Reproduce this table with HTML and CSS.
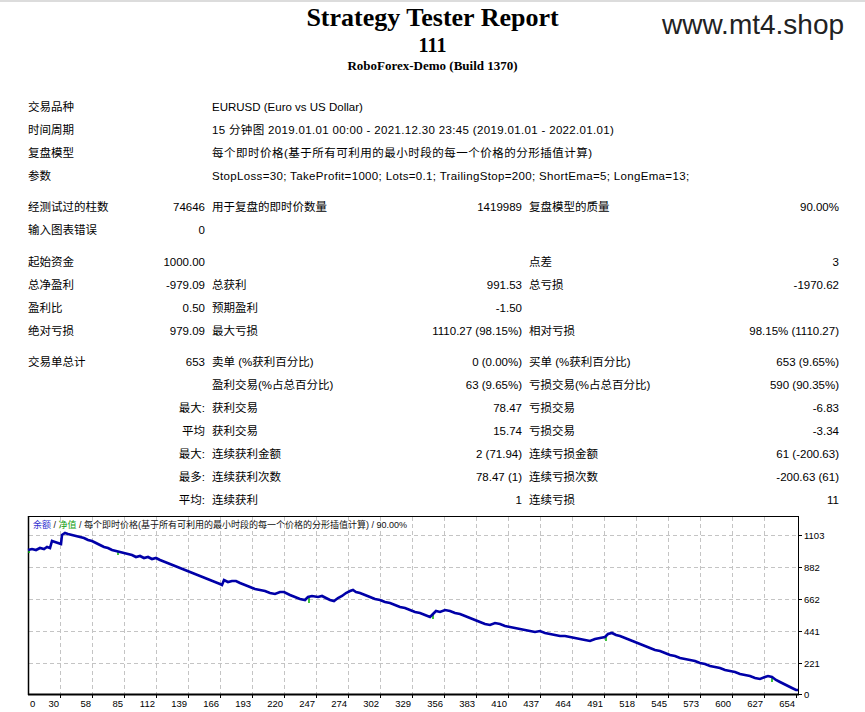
FILE: index.html
```html
<!DOCTYPE html>
<html lang="zh">
<head>
<meta charset="utf-8">
<title>Strategy Tester: 111</title>
<link rel="stylesheet" href="styles.css">
</head>
<body>
<header class="head">
  <div class="title">Strategy Tester Report</div>
  <div class="name">111</div>
  <div class="server">RoboForex-Demo (Build 1370)</div>
  <div class="watermark">www.mt4.shop</div>
</header>

<section class="stats">
  <div class="w2">交易品种</div><div class="w4">EURUSD (Euro vs US Dollar)</div>
  <div class="w2">时间周期</div><div class="w4 spaced">15 分钟图 2019.01.01 00:00 - 2021.12.30 23:45 (2019.01.01 - 2022.01.01)</div>
  <div class="w2">复盘模型</div><div class="w4 cjk">每个即时价格(基于所有可利用的最小时段的每一个价格的分形插值计算)</div>
  <div class="w2">参数</div><div class="w4 spaced">StopLoss=30; TakeProfit=1000; Lots=0.1; TrailingStop=200; ShortEma=5; LongEma=13;</div>
  <div class="gap"></div>

  <div>经测试过的柱数</div><div class="r">74646</div><div>用于复盘的即时价数量</div><div class="r">1419989</div><div>复盘模型的质量</div><div class="r">90.00%</div>
  <div>输入图表错误</div><div class="r">0</div><div class="w4"></div>
  <div class="gap g9"></div>

  <div>起始资金</div><div class="r">1000.00</div><div></div><div></div><div>点差</div><div class="r">3</div>
  <div>总净盈利</div><div class="r">-979.09</div><div>总获利</div><div class="r">991.53</div><div>总亏损</div><div class="r">-1970.62</div>
  <div>盈利比</div><div class="r">0.50</div><div>预期盈利</div><div class="r">-1.50</div><div></div><div></div>
  <div>绝对亏损</div><div class="r">979.09</div><div>最大亏损</div><div class="r">1110.27 (98.15%)</div><div>相对亏损</div><div class="r">98.15% (1110.27)</div>
  <div class="gap"></div>

  <div>交易单总计</div><div class="r">653</div><div>卖单 (%获利百分比)</div><div class="r">0 (0.00%)</div><div>买单 (%获利百分比)</div><div class="r">653 (9.65%)</div>
  <div></div><div></div><div>盈利交易(%占总百分比)</div><div class="r">63 (9.65%)</div><div>亏损交易(%占总百分比)</div><div class="r">590 (90.35%)</div>
  <div></div><div class="r">最大:</div><div>获利交易</div><div class="r">78.47</div><div>亏损交易</div><div class="r">-6.83</div>
  <div></div><div class="r">平均</div><div>获利交易</div><div class="r">15.74</div><div>亏损交易</div><div class="r">-3.34</div>
  <div></div><div class="r">最大:</div><div>连续获利金额</div><div class="r">2 (71.94)</div><div>连续亏损金额</div><div class="r">61 (-200.63)</div>
  <div></div><div class="r">最多:</div><div>连续获利次数</div><div class="r">78.47 (1)</div><div>连续亏损次数</div><div class="r">-200.63 (61)</div>
  <div></div><div class="r">平均:</div><div>连续获利</div><div class="r">1</div><div>连续亏损</div><div class="r">11</div>
</section>

<svg class="chart" width="865" height="200" viewBox="0 0 865 200" xmlns="http://www.w3.org/2000/svg">
  <g transform="translate(0,-512)">
    <g class="grid" stroke="#c4c4c4" stroke-width="1" stroke-dasharray="4 3" fill="none">
      <path d="M60.5 517V694M92.5 517V694M124.5 517V694M156.5 517V694M188.5 517V694M220.5 517V694M252.5 517V694M284.5 517V694M316.5 517V694M348.5 517V694M380.5 517V694M412.5 517V694M444.5 517V694M476.5 517V694M508.5 517V694M540.5 517V694M572.5 517V694M604.5 517V694M636.5 517V694M668.5 517V694M700.5 517V694M732.5 517V694M764.5 517V694"/>
      <path d="M29 535.5H799M29 567.5H799M29 599.5H799M29 631.5H799M29 663.5H799"/>
    </g>
    <rect x="28.5" y="516.5" width="770" height="178" fill="none" stroke="#000" stroke-width="1"/>
    <path d="M28 694.5H799" stroke="#000" stroke-width="2"/>
    <path d="M28.5 516V695" stroke="#000" stroke-width="1.5"/>
    <g stroke="#000" stroke-width="1">
      <path d="M60.5 695V698M92.5 695V698M124.5 695V698M156.5 695V698M188.5 695V698M220.5 695V698M252.5 695V698M284.5 695V698M316.5 695V698M348.5 695V698M380.5 695V698M412.5 695V698M444.5 695V698M476.5 695V698M508.5 695V698M540.5 695V698M572.5 695V698M604.5 695V698M636.5 695V698M668.5 695V698M700.5 695V698M732.5 695V698M764.5 695V698M796.5 695V698"/>
      <path d="M799 535.5H802M799 567.5H802M799 599.5H802M799 631.5H802M799 663.5H802M799 694.5H802"/>
    </g>

    <g stroke="#00b000" stroke-width="1.5">
      <path d="M29 549V553M118 551V555M309 597V603M433 615V619M606 637V641M772 678V682"/>
    </g>
    <polyline fill="none" stroke="#0000a8" stroke-width="2.6" stroke-linejoin="miter"
      points="28,550 32,549 36,550 40,548 44,549 47,547 50,548 52,541 55,542 58,543 61,544 62,535 65,533 68,534 72,535 76,536 80,537 84,538 88,540 92,541 96,543 100,545 104,547 108,548 112,550 116,551 120,552 124,553 128,554 132,555 136,557 140,556 144,558 148,557 152,559 156,558 160,560 165,562 170,564 175,566 180,568 185,570 190,572 195,574 200,576 205,578 210,580 215,582 220,584 222,585 224,580 228,582 232,581 236,581 240,583 245,585 250,587 255,589 260,590 265,591 270,593 275,594 280,592 284,592 290,595 295,597 300,599 305,600 308,597 312,596 318,597 322,596 326,598 330,600 334,601 338,598 342,596 346,593 350,591 353,590 356,592 360,593 365,595 370,597 375,599 380,600 385,602 390,603 395,605 400,607 405,608 410,610 415,612 420,613 425,615 430,617 433,614 436,611 440,612 445,610 450,611 455,613 460,614 465,616 470,618 475,620 480,622 485,624 490,625 495,623 500,624 505,626 510,627 515,628 520,629 525,630 530,631 535,632 540,631 545,633 550,634 555,635 560,636 565,636 570,637 575,638 580,639 585,640 590,641 595,639 600,638 605,637 608,634 612,633 616,635 620,636 625,638 630,640 635,642 640,644 645,646 650,648 655,650 660,651 665,653 670,655 675,656 680,658 685,659 690,660 695,661 700,663 705,664 710,666 715,667 720,668 725,670 730,671 735,672 740,674 745,675 750,676 755,678 760,679 765,677 768,676 772,677 776,680 780,682 784,684 788,686 792,688 796,690 798,690"/>

    <text class="legend" x="33" y="527.5"><tspan fill="#3030d0">余额</tspan> / <tspan fill="#10a010">净值</tspan> / 每个即时价格(基于所有可利用的最小时段的每一个价格的分形插值计算) / 90.00%</text>

    <g class="axis">
      <text x="30" y="706.5">0</text>
      <g text-anchor="end">
        <text x="59" y="706.5">30</text><text x="91" y="706.5">58</text><text x="123" y="706.5">85</text><text x="155" y="706.5">112</text><text x="187" y="706.5">139</text><text x="219" y="706.5">166</text><text x="251" y="706.5">193</text><text x="283" y="706.5">220</text><text x="315" y="706.5">247</text><text x="347" y="706.5">274</text><text x="379" y="706.5">302</text><text x="411" y="706.5">329</text><text x="443" y="706.5">356</text><text x="475" y="706.5">383</text><text x="507" y="706.5">410</text><text x="539" y="706.5">437</text><text x="571" y="706.5">464</text><text x="603" y="706.5">491</text><text x="635" y="706.5">518</text><text x="667" y="706.5">545</text><text x="699" y="706.5">573</text><text x="731" y="706.5">600</text><text x="763" y="706.5">627</text><text x="795" y="706.5">654</text>
      </g>
      <text x="804" y="538.5">1103</text><text x="804" y="570.5">882</text><text x="804" y="602.5">662</text><text x="804" y="634.5">441</text><text x="804" y="666.5">221</text><text x="804" y="697.5">0</text>
    </g>
  </g>
</svg>
</body>
</html>
```

FILE: styles.css
```css
html, body {
  margin: 0;
  padding: 0;
  background: #fff;
}

body {
  font-family: "Liberation Sans", "Noto Sans CJK SC", sans-serif;
  color: #000;
  width: 865px;
  overflow: hidden;
}

.head {
  position: relative;
  box-sizing: border-box;
  height: 96px;
  border-top: 2px solid #dcdcdc;
  padding-top: 1px;
  text-align: center;
  font-family: "Liberation Serif", "Noto Sans CJK SC", serif;
  font-weight: bold;
}

.title {
  font-size: 26px;
  line-height: 30px;
}

.name {
  font-size: 20px;
  line-height: 24px;
}

.server {
  font-size: 13px;
  line-height: 18px;
}

.watermark {
  position: absolute;
  left: 662px;
  top: 9px;
  font-family: "Liberation Sans", sans-serif;
  font-weight: normal;
  font-size: 28px;
  line-height: 28px;
  color: #222;
}

.stats {
  display: grid;
  grid-template-columns: 120px 50px 190px 113px 190px 113px;
  column-gap: 7px;
  padding-left: 28px;
  font-size: 11.5px;
  line-height: 23px;
}

.stats > div {
  white-space: nowrap;
  min-height: 23px;
}

.stats > .gap {
  grid-column: 1 / -1;
  min-height: 0;
  height: 8px;
}

.stats > .g9 {
  height: 9px;
}

.r {
  text-align: right;
}

.w2 {
  grid-column: span 2;
}

.w4 {
  grid-column: span 4;
}

.spaced {
  letter-spacing: 0.34px;
}

.cjk {
  letter-spacing: 0.5px;
}

.chart {
  display: block;
}

.legend {
  font-family: "Liberation Sans", "Noto Sans CJK SC", sans-serif;
  font-size: 9px;
  fill: #111;
}

.axis text {
  font-family: "Liberation Sans", sans-serif;
  font-size: 9.5px;
  fill: #000;
}
```
